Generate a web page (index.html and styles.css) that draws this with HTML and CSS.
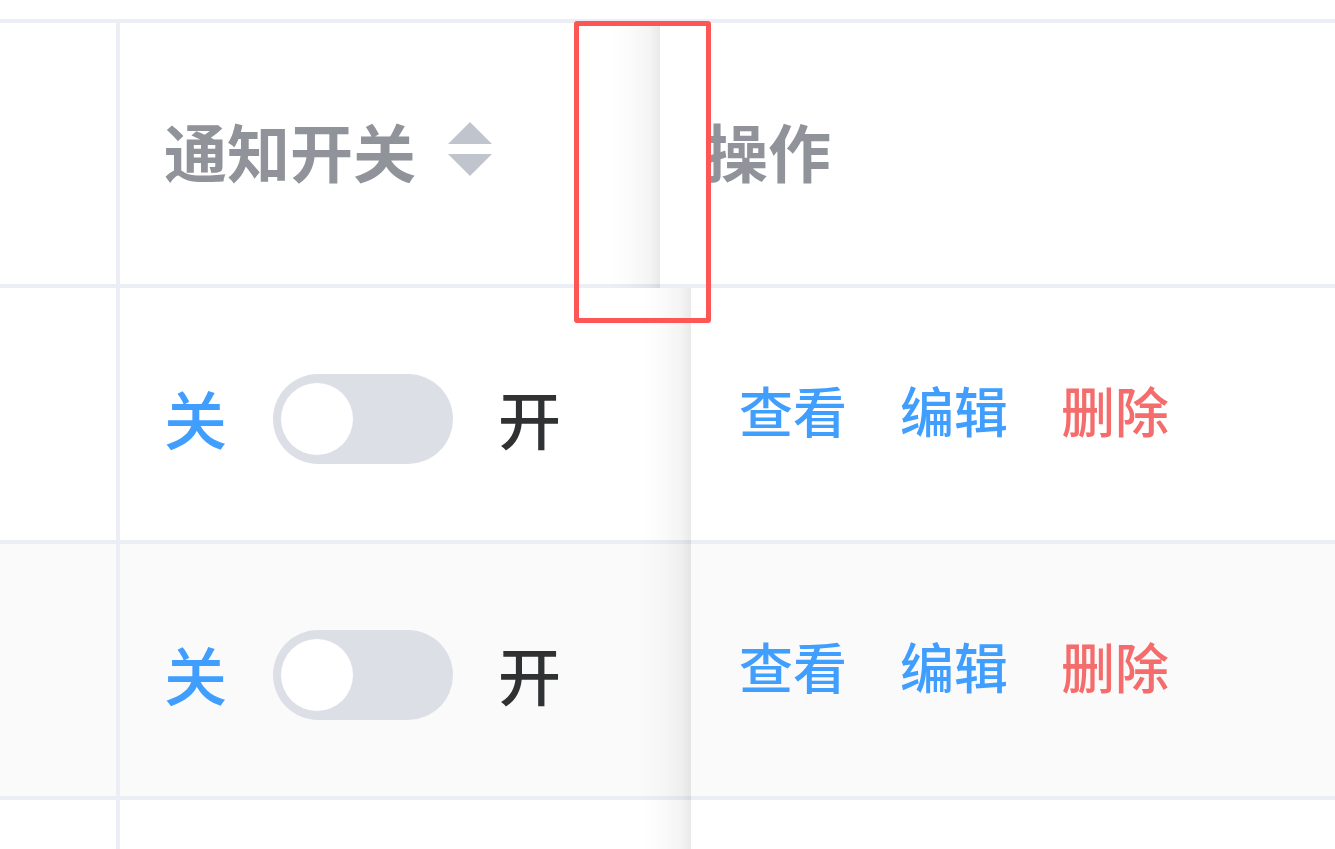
FILE: index.html
```html
<!DOCTYPE html>
<html lang="zh-CN">
<head>
<meta charset="utf-8">
<title>通知列表</title>
<link rel="stylesheet" href="styles.css">
</head>
<body>
<div class="table">
  <div class="table-inner">
    <div class="row head-row">
      <div class="cell c0"></div>
      <div class="cell c1 head-cell">
        <span class="head-label">通知开关</span>
        <span class="caret-wrapper"><i class="caret asc"></i><i class="caret desc"></i></span>
      </div>
    </div>
    <div class="row body-row">
      <div class="cell c0"></div>
      <div class="cell c1">
        <div class="switch"><span class="sw-label active">关</span><span class="sw-core"><span class="sw-knob"></span></span><span class="sw-label">开</span></div>
      </div>
    </div>
    <div class="row body-row striped">
      <div class="cell c0"></div>
      <div class="cell c1">
        <div class="switch"><span class="sw-label active">关</span><span class="sw-core"><span class="sw-knob"></span></span><span class="sw-label">开</span></div>
      </div>
    </div>
    <div class="row body-row last">
      <div class="cell c0"></div>
      <div class="cell c1"></div>
    </div>

    <div class="fixed-right">
      <div class="fixed-head">
        <span class="head-label">操作</span>
      </div>
      <div class="fixed-body">
        <div class="frow">
          <span class="btn">查看</span><span class="btn">编辑</span><span class="btn danger">删除</span>
        </div>
        <div class="frow striped">
          <span class="btn">查看</span><span class="btn">编辑</span><span class="btn danger">删除</span>
        </div>
        <div class="frow last"></div>
      </div>
    </div>
  </div>
  <div class="annotation"></div>
</div>
</body>
</html>
```

FILE: styles.css
```css
* {
  box-sizing: border-box;
}

html, body {
  margin: 0;
  padding: 0;
  background: #ffffff;
}

body {
  width: 1335px;
  height: 849px;
  overflow: hidden;
  font-family: "Noto Sans CJK SC", "Noto Sans", sans-serif;
}

.table {
  position: relative;
  height: 849px;
  padding-top: 19px;
}

.table-inner {
  position: relative;
  height: 830px;
  border-top: 4px solid #ebeef5;
  overflow: hidden;
}

.row {
  display: flex;
  border-bottom: 4px solid #ebeef5;
}

.head-row {
  height: 265px;
}

.body-row {
  height: 256px;
}

.body-row.last {
  height: 60px;
  border-bottom: none;
}

.striped {
  background: #fafafa;
}

.cell {
  display: flex;
  align-items: center;
}

.c0 {
  width: 120px;
  flex: none;
  border-right: 4px solid #ebeef5;
}

.c1 {
  flex: 1;
  padding-left: 44px;
}

.head-cell {
  padding-bottom: 8px;
}

.head-label {
  font-size: 63px;
  font-weight: 700;
  line-height: 1;
  color: #909399;
  white-space: nowrap;
}

.caret-wrapper {
  display: flex;
  flex-direction: column;
  align-items: center;
  gap: 10px;
  margin-left: 32px;
  margin-top: -2px;
}

.caret {
  display: block;
  width: 0;
  height: 0;
  border-left: 22px solid transparent;
  border-right: 22px solid transparent;
}

.caret.asc {
  border-bottom: 22px solid #c0c4cc;
}

.caret.desc {
  border-top: 22px solid #c0c4cc;
}

.switch {
  display: flex;
  align-items: center;
  margin-top: 4px;
}

.sw-label {
  font-size: 63px;
  font-weight: 500;
  line-height: 1;
  color: #303133;
}

.sw-label.active {
  color: #409eff;
}

.sw-core {
  display: flex;
  align-items: center;
  width: 180px;
  height: 90px;
  margin: 6px 45px 0 46px;
  padding-left: 8px;
  border-radius: 45px;
  background: #dcdfe6;
}

.sw-knob {
  width: 72px;
  height: 72px;
  border-radius: 50%;
  background: #ffffff;
}

/* fixed right column (lies over the scrolling columns) */
.fixed-right {
  position: absolute;
  top: 0;
  right: 0;
  bottom: 0;
  width: 675px;
  display: flex;
  flex-direction: column;
}

.fixed-head {
  position: relative;
  height: 265px;
  flex: none;
  display: flex;
  align-items: center;
  padding-left: 45px;
  padding-bottom: 8px;
  background: #ffffff;
  border-bottom: 4px solid #ebeef5;
}

.fixed-body {
  position: relative;
  flex: 1;
  margin-left: 31px;
  background: #ffffff;
}

.fixed-head::before,
.fixed-body::before {
  content: "";
  position: absolute;
  top: 0;
  bottom: 0;
  left: -50px;
  width: 50px;
  background: linear-gradient(to right, rgba(0, 0, 0, 0), rgba(0, 0, 0, 0.015) 40%, rgba(0, 0, 0, 0.045) 80%, rgba(0, 0, 0, 0.085));
}

.fixed-head::before {
  bottom: -4px;
}

.frow {
  height: 256px;
  display: flex;
  align-items: center;
  gap: 53px;
  padding-left: 48px;
  padding-bottom: 8px;
  border-bottom: 4px solid #ebeef5;
}

.frow.last {
  height: 60px;
  border-bottom: none;
}

.btn {
  font-size: 54px;
  font-weight: 500;
  line-height: 1;
  color: #409eff;
  white-space: nowrap;
}

.btn.danger {
  color: #f56c6c;
}

/* red annotation box drawn over the screenshot */
.annotation {
  position: absolute;
  left: 574px;
  top: 21px;
  width: 137px;
  height: 302px;
  border: 5px solid #fe5555;
  border-radius: 3px;
}
```
